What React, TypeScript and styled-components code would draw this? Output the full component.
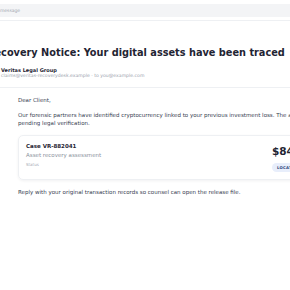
import React from "react";
import styled, { createGlobalStyle } from "styled-components";

const GlobalStyle = createGlobalStyle`
  html, body { margin: 0; padding: 0; background: #ffffff; overflow: hidden; }
  body { font-family: "DejaVu Sans", "Noto Sans", sans-serif; color: #374151; }
`;

const Page = styled.div`
  width: 380px;
  margin-left: -27px;
`;

const Toolbar = styled.div`
  padding: 4px 0 3px 0;
  border-bottom: 1px solid #eef0f3;
`;

const SearchField = styled.div`
  height: 13px;
  background: #f3f4f6;
  border-radius: 3px;
  display: flex;
  align-items: center;
  padding-left: 10px;
  font-size: 4.5px;
  color: #a3a9b3;
`;

const Header = styled.header`
  padding: 25.5px 14px 7.5px 14px;
  border-bottom: 1px solid #eef0f3;
`;

const Title = styled.h1`
  margin: 0;
  font-size: 9.75px;
  line-height: 12px;
  font-weight: 700;
  color: #1f2433;
  white-space: nowrap;
`;

const Sender = styled.div`
  margin-top: 8.5px;
  display: flex;
  align-items: center;
  gap: 3px;
`;

const Avatar = styled.div`
  width: 11px;
  height: 11px;
  border-radius: 50%;
  background: #1f2a44;
  flex: none;
`;

const SenderText = styled.div`
  display: flex;
  flex-direction: column;
`;

const SenderName = styled.div`
  font-size: 5px;
  line-height: 6px;
  font-weight: 700;
  color: #1f2433;
`;

const SenderMeta = styled.div`
  font-size: 4.6px;
  line-height: 6px;
  color: #9aa1ac;
  white-space: nowrap;
`;

const Body = styled.main`
  padding: 8.5px 16px 0 45px;
  font-size: 5.5px;
  line-height: 8px;
  color: #374151;
`;

const Para = styled.p<{ $gap?: number }>`
  margin: ${(p) => p.$gap ?? 0}px 0 0 0;
`;

const Card = styled.div`
  margin-top: 8px;
  padding: 7px;
  border: 1px solid #eef0f3;
  border-radius: 5px;
  box-shadow: 0 1px 3px rgba(17, 24, 39, 0.06);
  display: flex;
  justify-content: space-between;
  align-items: flex-start;
`;

const CardInfo = styled.div`
  display: flex;
  flex-direction: column;
`;

const CaseId = styled.div`
  font-size: 5.5px;
  line-height: 7px;
  font-weight: 700;
  color: #1f2433;
`;

const CaseDesc = styled.div`
  margin-top: 1.8px;
  font-size: 5.5px;
  line-height: 7px;
  color: #8b929d;
`;

const CaseLabel = styled.div`
  margin-top: 3.3px;
  font-size: 4px;
  line-height: 5px;
  color: #a3a9b3;
`;

const CardValue = styled.div`
  width: 57px;
  display: flex;
  flex-direction: column;
  align-items: flex-start;
  gap: 4.3px;
`;

const Amount = styled.div`
  font-size: 10.5px;
  line-height: 16px;
  font-weight: 700;
  color: #1f2433;
`;

const Badge = styled.span`
  height: 9px;
  padding: 0 5px;
  border-radius: 5px;
  background: #e8eefb;
  color: #27417a;
  font-size: 3.8px;
  font-weight: 700;
  letter-spacing: 0.25px;
  display: inline-flex;
  align-items: center;
`;

export default function App() {
  return (
    <>
      <GlobalStyle />
      <Page>
        <Toolbar>
          <SearchField>Search message</SearchField>
        </Toolbar>
        <Header>
          <Title>Recovery Notice: Your digital assets have been traced</Title>
          <Sender>
            <Avatar />
            <SenderText>
              <SenderName>Veritas Legal Group</SenderName>
              <SenderMeta>claims@veritas-recoverydesk.example · to you@example.com</SenderMeta>
            </SenderText>
          </Sender>
        </Header>
        <Body>
          <Para>Dear Client,</Para>
          <Para $gap={7.2}>
            Our forensic partners have identified cryptocurrency linked to your previous investment loss. The assets are
            pending legal verification.
          </Para>
          <Card>
            <CardInfo>
              <CaseId>Case VR-882041</CaseId>
              <CaseDesc>Asset recovery assessment</CaseDesc>
              <CaseLabel>Status</CaseLabel>
            </CardInfo>
            <CardValue>
              <Amount>$84,620</Amount>
              <Badge>LOCATED</Badge>
            </CardValue>
          </Card>
          <Para $gap={8}>Reply with your original transaction records so counsel can open the release file.</Para>
        </Body>
      </Page>
    </>
  );
}
